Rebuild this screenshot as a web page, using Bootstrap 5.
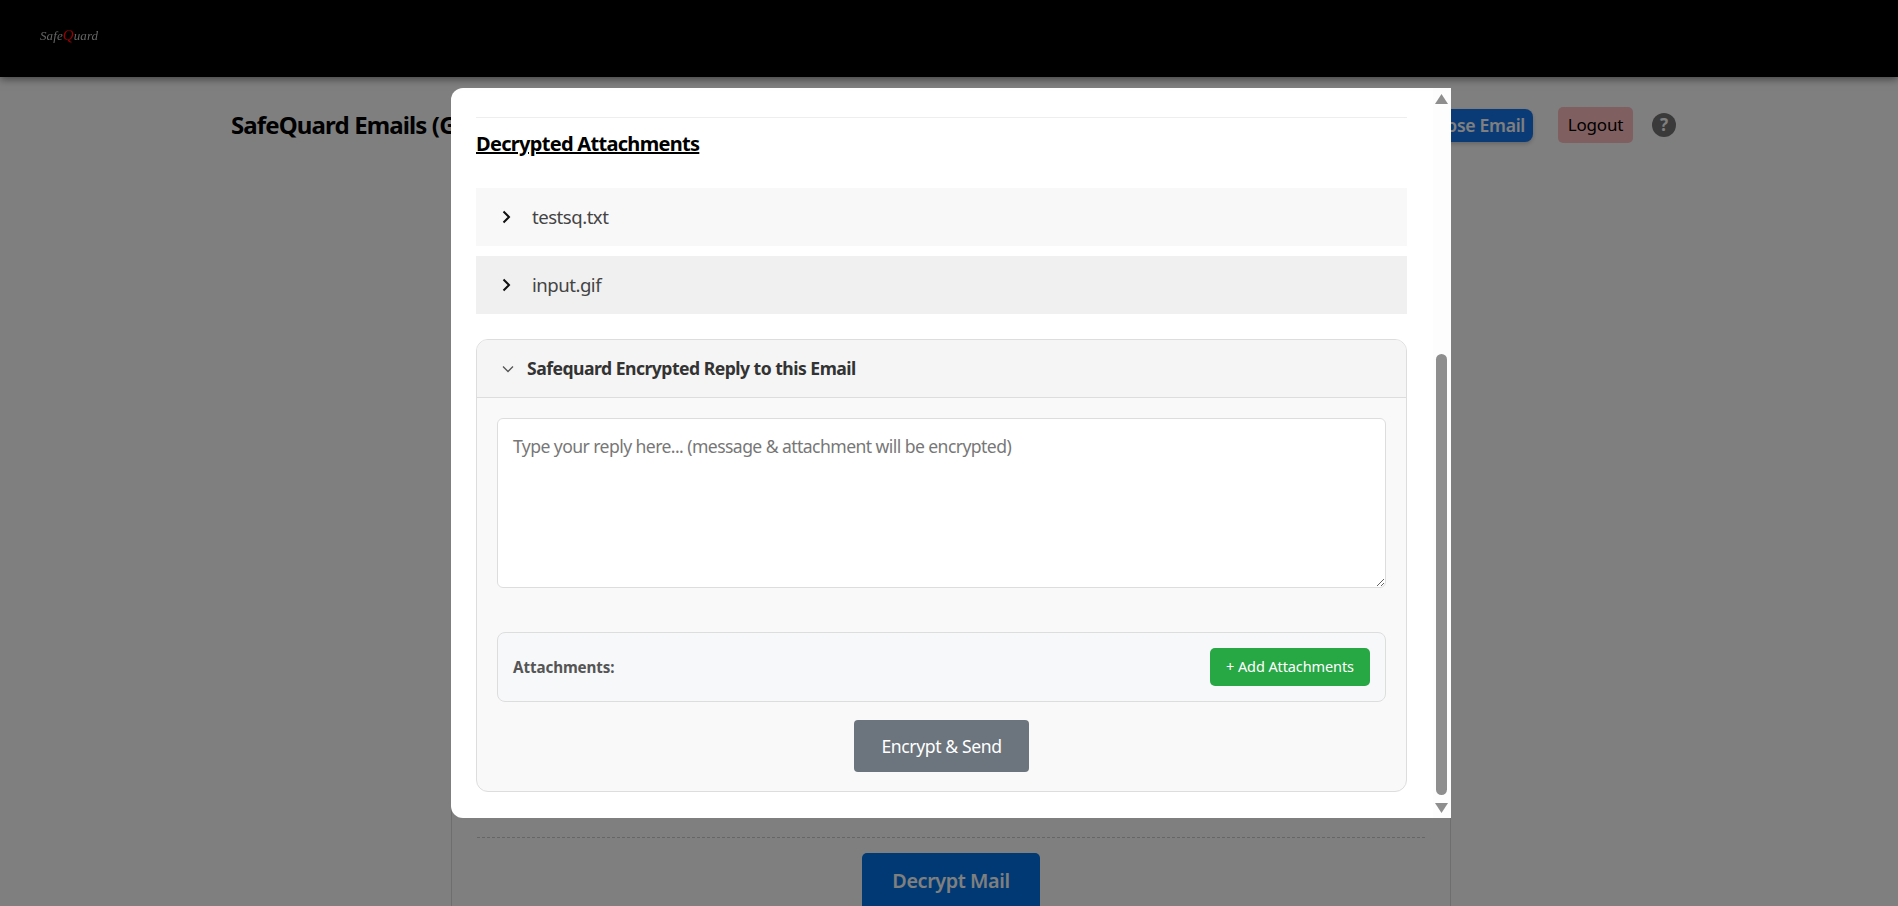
<!DOCTYPE html>
<html lang="en">
<head>
<meta charset="utf-8">
<title>SafeQuard</title>
<link href="https://cdn.jsdelivr.net/npm/bootstrap@5.3.0/dist/css/bootstrap.min.css" rel="stylesheet">
<style>
html,body{height:906px;overflow:hidden;}
body{font-family:"Noto Sans","Open Sans",sans-serif;background:#fff;color:#212529;}
.sq-nav{height:77px;background:#000;box-shadow:0 2px 8px rgba(0,0,0,.5);padding:0 40px 7px;position:relative;z-index:1060;}
.sq-logo{font-family:"Liberation Serif",serif;font-style:italic;font-size:13px;color:#666;letter-spacing:.1px;}
.sq-logo span{color:#960000;font-size:15px;}
.sq-page{width:1445px;margin:0 0 0 231px;padding:30px 0 0 0;}
.sq-title{font-size:24px;font-weight:700;margin:0;color:#000;letter-spacing:-.87px;white-space:nowrap;}
.sq-compose{height:33px;padding:0 8px 0 14px;border:0;border-radius:8px;color:#fff;font-size:17.6px;font-weight:600;letter-spacing:-.3px;background:#1676ee;box-shadow:0 2px 4px rgba(0,0,0,.2);}
.sq-logout{height:36px;width:75px;padding:0;border:0;border-radius:5px;color:#000;font-size:17px;letter-spacing:-.2px;margin-left:25px;background:#ffbfbf;}
.sq-help{width:24px;height:24px;border-radius:50%;background:#757575;color:#fff;font-size:17px;font-weight:700;margin:0 0 0 19px;line-height:24px;text-align:center;}
.sq-mailcard{width:1000px;height:743px;overflow:hidden;margin:20px 0 0 451px;padding-top:673px;border:1px solid #ddd;border-bottom:0;}
.sq-dash{border-top:1px dashed #ccc;margin:0 25px 15px;}
.sq-decrypt{display:block;width:178px;height:60px;margin:0 auto;color:#fff;border:0;border-radius:5px;font-weight:600;font-size:19.800px;letter-spacing:-.4px;background:#0072e6;padding:0 0 4px;}
.sq-backdrop{position:fixed;inset:77px 0 0 0;background:rgba(0,0,0,.5);z-index:1040;}
.sq-modal{position:fixed;left:451px;top:88px;width:1000px;height:730px;background:#fff;border-radius:12px 0 0 12px;z-index:1055;overflow:hidden;}
.sq-content{padding:29px 44px 26px 25px;}
.sq-rule{height:1px;background:#eee;margin-bottom:14px;}
.sq-h{font-size:20px;font-weight:700;color:#000;text-decoration:underline;margin:0 0 32px;line-height:24px;letter-spacing:-.7px;}
.sq-item{height:58px;padding-left:25.500px;margin-bottom:10px;font-size:18.6px;color:#444;background:#f8f8f8;}
.sq-item.alt{background:#f0f0f0;}
.sq-item svg{margin-right:21.500px;}
.sq-name{letter-spacing:-.5px;font-weight:400;}
.sq-panel{margin-top:25px;border:1px solid #ddd;border-radius:12px;background:#f9f9f9;overflow:hidden;height:453px;}
.sq-phead{height:58px;background:#f5f5f5;border-bottom:1px solid #ddd;padding-left:25px;font-weight:700;font-size:17.6px;letter-spacing:-.52px;color:#333;}
.sq-phead svg{margin-right:13px;}
.sq-pbody{padding:20px;}
.sq-text{display:block;width:100%;height:170px;border:1px solid #ddd;border-radius:6px;background:#fff;padding:14px 15px;font-size:17.600px;letter-spacing:-.58px;resize:vertical;}
.sq-text::placeholder{color:#777;}
.sq-attach{height:70px;margin-top:44px;border:1px solid #ddd;border-radius:8px;background:#f6f8fa;padding:0 15px;}
.sq-label{font-weight:700;font-size:15.2px;color:#555;letter-spacing:-.1px;}
.sq-add{width:160px;height:38px;padding:0;background:#28a745;border:0;border-radius:5px;color:#fff;font-size:14.5px;letter-spacing:-.1px;}
.sq-send{width:175px;height:52px;padding:0;background:#6c757d;border:0;border-radius:4px;color:#fff;font-size:17.6px;letter-spacing:-.4px;display:block;margin:18px auto 0;}
.sq-bar{position:absolute;top:0;right:0;bottom:0;width:18px;background:#fdfdfd;}
.sq-arrow{position:absolute;left:2px;}
.sq-thumb{position:absolute;left:3px;top:266px;width:11px;height:441px;border-radius:6px;background:#8e8e8e;}
</style>
</head>
<body>
<nav class="navbar sq-nav align-items-center justify-content-start">
  <div class="sq-logo">Safe<span>Q</span>uard</div>
</nav>
<div class="sq-page">
  <div class="d-flex align-items-center">
    <h1 class="sq-title flex-grow-1">SafeQuard Emails (Gmail)</h1>
    <button class="btn sq-compose">Compose Email</button>
    <button class="btn sq-logout">Logout</button>
    <div class="sq-help">?</div>
  </div>
</div>
<div class="sq-mailcard">
  <div class="sq-dash"></div>
  <button class="btn sq-decrypt">Decrypt Mail</button>
</div>
<div class="sq-backdrop"></div>
<div class="sq-modal">
  <div class="sq-content">
    <div class="sq-rule"></div>
    <h2 class="sq-h">Decrypted Attachments</h2>
    <div class="sq-item d-flex align-items-center">
      <svg width="9" height="14" viewBox="0 0 9 14"><path d="M1.5 1.5 7 7l-5.500 5.500" fill="none" stroke="#111" stroke-width="2"/></svg>
      <span class="sq-name">testsq.txt</span>
    </div>
    <div class="sq-item alt d-flex align-items-center">
      <svg width="9" height="14" viewBox="0 0 9 14"><path d="M1.5 1.5 7 7l-5.500 5.500" fill="none" stroke="#111" stroke-width="2"/></svg>
      <span class="sq-name">input.gif</span>
    </div>
    <div class="sq-panel">
      <div class="sq-phead d-flex align-items-center">
        <svg width="12" height="8" viewBox="0 0 12 8"><path d="M1 1.500 6 6.500l5-5" fill="none" stroke="#555" stroke-width="1.300"/></svg>
        <span>Safequard Encrypted Reply to this Email</span>
      </div>
      <div class="sq-pbody">
        <textarea class="sq-text" placeholder="Type your reply here... (message &amp; attachment will be encrypted)"></textarea>
        <div class="sq-attach d-flex align-items-center justify-content-between">
          <span class="sq-label">Attachments:</span>
          <button class="btn sq-add">+ Add Attachments</button>
        </div>
        <button class="btn sq-send">Encrypt &amp; Send</button>
      </div>
    </div>
  </div>
  <div class="sq-bar">
    <svg class="sq-arrow" style="top:6px" width="13" height="10" viewBox="0 0 13 10"><path d="M6.500 0 13 10H0z" fill="#8e8e8e"/></svg>
    <div class="sq-thumb"></div>
    <svg class="sq-arrow" style="top:715px" width="13" height="10" viewBox="0 0 13 10"><path d="M6.500 10 13 0H0z" fill="#8e8e8e"/></svg>
  </div>
</div>
</body>
</html>
